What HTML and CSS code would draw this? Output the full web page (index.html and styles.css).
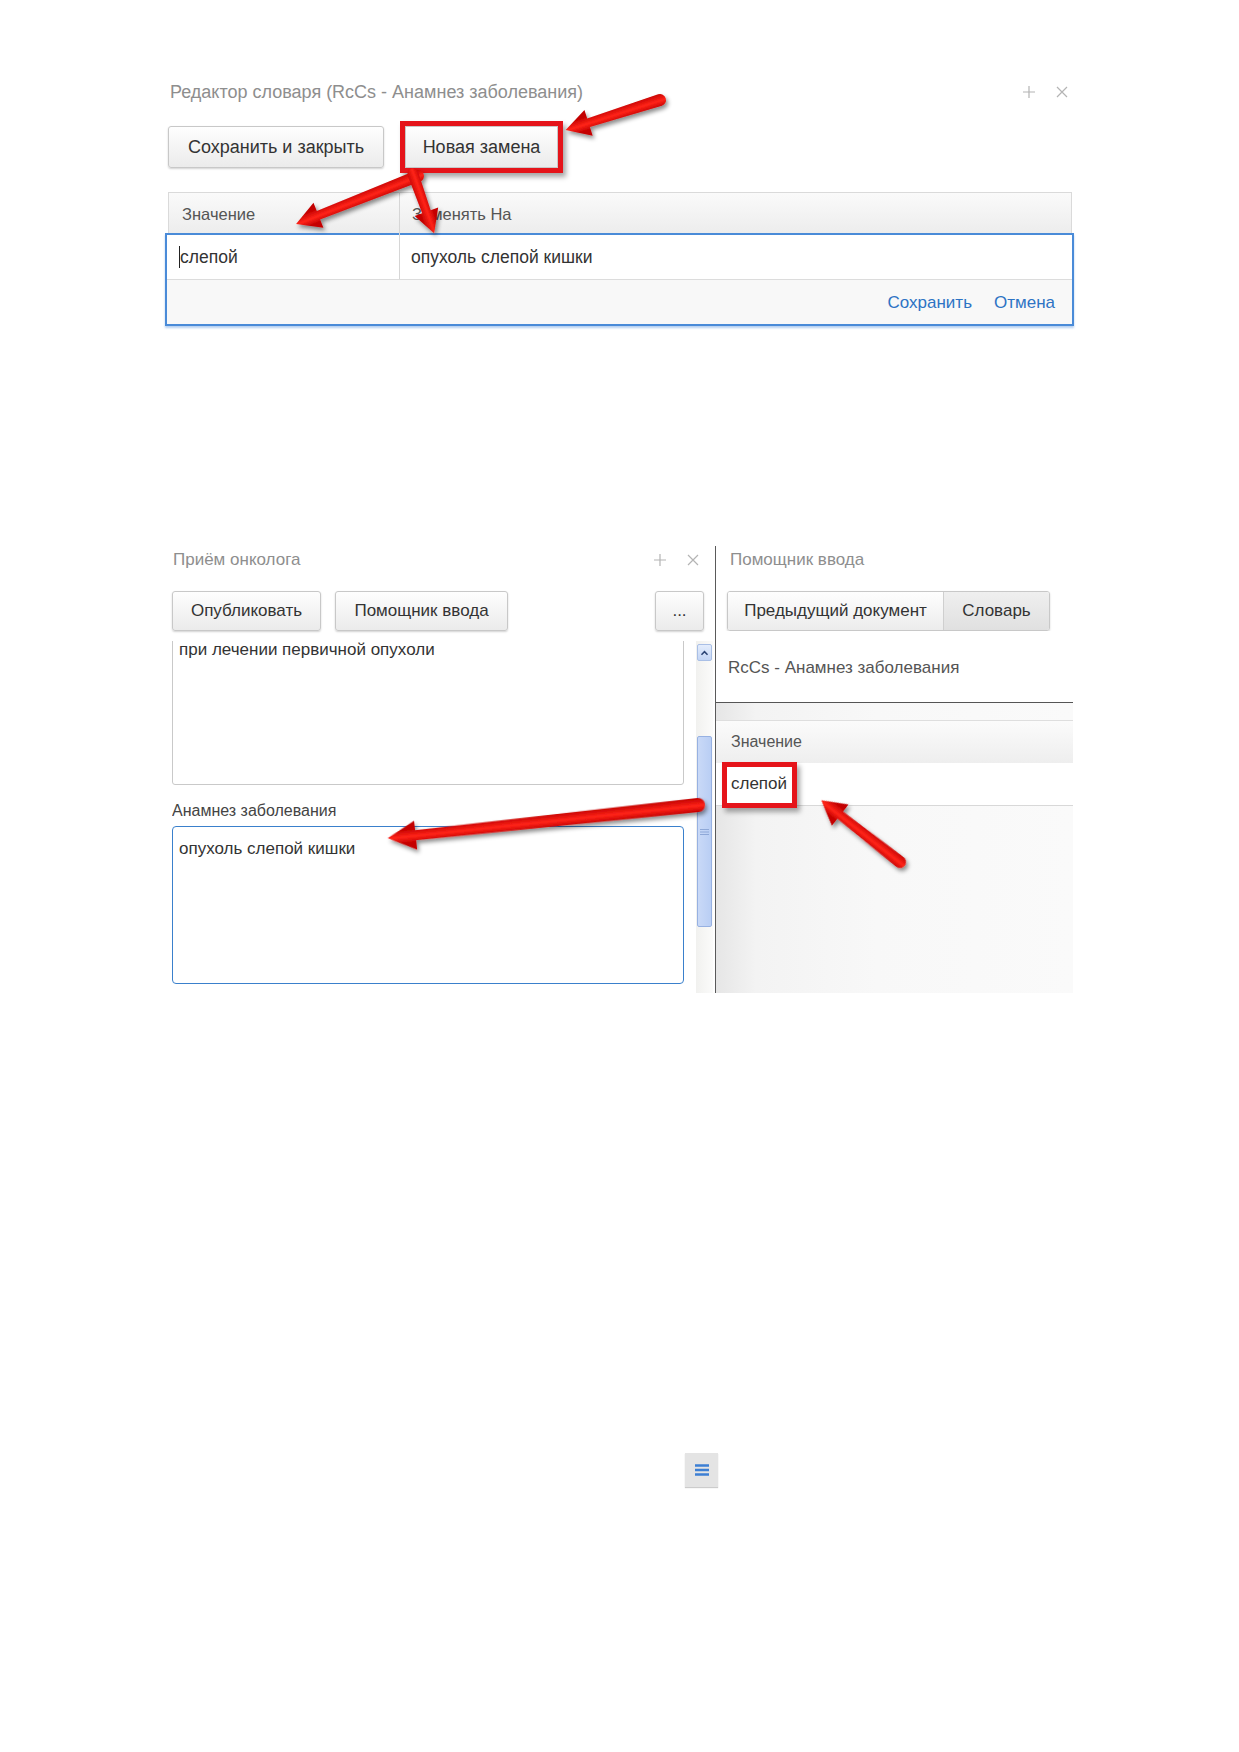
FILE: index.html
```html
<!DOCTYPE html>
<html lang="ru">
<head>
<meta charset="UTF-8">
<meta name="viewport" content="width=device-width, initial-scale=1.0">
<title>Редактор словаря</title>
<link rel="stylesheet" href="styles.css">
</head>
<body>
<div class="page">

<!-- Dictionary editor window -->
<div class="editor">
  <div class="win-head">
    <span class="win-title">Редактор словаря (RcCs - Анамнез заболевания)</span>
    <span class="win-tools">
      <svg width="12" height="12" viewBox="0 0 12 12"><path d="M6 0v12M0 6h12" /></svg>
      <svg width="12" height="12" viewBox="0 0 12 12"><path d="M1 1l10 10M11 1L1 11" /></svg>
    </span>
  </div>
  <div class="toolbar">
    <button class="btn btn-save">Сохранить и закрыть</button>
    <button class="btn btn-new mark">Новая замена</button>
  </div>
  <div class="grid">
    <div class="grid-head">
      <div class="col-value">Значение</div>
      <div class="col-replace">Заменять На</div>
    </div>
    <div class="grid-edit">
      <div class="grid-row">
        <div class="col-value"><span class="caret"></span>слепой</div>
        <div class="col-replace">опухоль слепой кишки</div>
      </div>
      <div class="grid-actions">
        <a href="#">Сохранить</a>
        <a href="#">Отмена</a>
      </div>
    </div>
  </div>
</div>

<!-- Oncologist visit form + input helper -->
<div class="workspace">
  <div class="form-pane">
    <div class="win-head">
      <span class="win-title">Приём онколога</span>
      <span class="win-tools">
        <svg width="12" height="12" viewBox="0 0 12 12"><path d="M6 0v12M0 6h12" /></svg>
        <svg width="12" height="12" viewBox="0 0 12 12"><path d="M1 1l10 10M11 1L1 11" /></svg>
      </span>
    </div>
    <div class="toolbar pane-toolbar">
      <button class="btn btn-publish">Опубликовать</button>
      <button class="btn btn-helper">Помощник ввода</button>
      <button class="btn btn-more">...</button>
    </div>
    <div class="scroll-box">
      <div class="scroll-body">
        <div class="form">
          <div class="memo memo-plain">при лечении первичной опухоли</div>
          <div class="field-label">Анамнез заболевания</div>
          <div class="memo memo-focus">опухоль слепой кишки</div>
        </div>
      </div>
      <div class="scrollbar">
        <div class="sb-up">
          <svg width="15" height="12" viewBox="0 0 15 12"><path d="M4 8l3.5-3.5L11 8" /></svg>
        </div>
        <div class="sb-thumb">
          <svg width="9" height="8" viewBox="0 0 9 8"><path d="M0 1.5h9M0 4h9M0 6.5h9" /></svg>
        </div>
      </div>
    </div>
  </div>

  <div class="helper-pane">
    <div class="win-head">
      <span class="win-title">Помощник ввода</span>
    </div>
    <div class="seg">
      <button class="seg-btn">Предыдущий документ</button>
      <button class="seg-btn active">Словарь</button>
    </div>
    <div class="dict-name">RcCs - Анамнез заболевания</div>
    <div class="dict-list">
      <div class="dict-head">Значение</div>
      <div class="dict-row"><span class="mark cell-mark">слепой</span></div>
    </div>
  </div>
</div>

<div class="menu-btn">
  <svg width="14" height="12" viewBox="0 0 14 12"><path d="M0 1.5h14M0 6h14M0 10.5h14" /></svg>
</div>

<!-- red callout arrows drawn over the screens -->
<svg class="notes" width="1239" height="1752" viewBox="0 0 1239 1752">
  <defs>
    <linearGradient id="arrowFill" gradientUnits="userSpaceOnUse" x1="0" y1="-7" x2="0" y2="7">
      <stop offset="0" stop-color="#c40000"/>
      <stop offset="0.45" stop-color="#ff2418"/>
      <stop offset="1" stop-color="#c20000"/>
    </linearGradient>
    <filter id="arrowShadow" x="-20%" y="-50%" width="140%" height="200%">
      <feDropShadow dx="2" dy="3" stdDeviation="2" flood-color="#000" flood-opacity="0.45"/>
    </filter>
  </defs>
  <g fill="url(#arrowFill)" filter="url(#arrowShadow)">
    <path transform="translate(660 100) rotate(162.3)" d="M0,-6 L75,-4.5 L75,-13.5 L99,0 L75,13.5 L75,4.5 L0,6 A6,6 0 0 1 0,-6 Z"/>
    <path transform="translate(418 176) rotate(158.5)" d="M0,-6 L107,-4.5 L107,-13.5 L131,0 L107,13.5 L107,4.5 L0,6 A6,6 0 0 1 0,-6 Z"/>
    <path transform="translate(413 174) rotate(70.4)" d="M0,-5.5 L40,-4.5 L40,-12.5 L63,0 L40,12.5 L40,4.5 L0,5.5 A5.5,5.5 0 0 1 0,-5.5 Z"/>
    <path transform="translate(900 862) rotate(-141.9)" d="M0,-6 L76,-4.5 L76,-13.5 L100,0 L76,13.5 L76,4.5 L0,6 A6,6 0 0 1 0,-6 Z"/>
    <path transform="translate(698 805) rotate(173.9)" d="M0,-7 L284,-5 L284,-14.5 L312,0 L284,14.5 L284,5 L0,7 A7,7 0 0 1 0,-7 Z"/>
  </g>
</svg>

</div>
</body>
</html>
```

FILE: styles.css
```css
body {
  margin: 0;
  background-color: #fff;
  font-family: "Liberation Sans", Arial, sans-serif;
  color: #333;
}

.page {
  position: relative;
  width: 1239px;
  height: 1752px;
  overflow: hidden;
}

/* window header: grey title + plus / close */
.win-head {
  display: flex;
  align-items: center;
  justify-content: space-between;
  height: 30px;
}

.win-title {
  font-size: 17px;
  color: #8e8e8e;
}

.win-tools {
  display: flex;
  align-items: center;
  gap: 21px;
  padding-right: 6px;
}

.win-tools svg path {
  stroke: #b4b4b4;
  stroke-width: 1.2;
  fill: none;
}

.btn {
  height: 42px;
  padding: 0;
  font-family: "Liberation Sans", Arial, sans-serif;
  font-size: 17px;
  color: #333;
  border: 1px solid #c8c8c8;
  border-radius: 3px;
  background: linear-gradient(#fefefe, #ebebeb);
  box-shadow: 0 1px 2px rgba(0, 0, 0, 0.18);
}

/* red highlight frame */
.mark {
  box-shadow: 0 0 0 5px #e5141a, 3px 4px 5px 5px rgba(0, 0, 0, 0.35);
}

/* ---------- dictionary editor ---------- */
.editor {
  width: 904px;
  margin: 77px 0 0 168px;
}

.editor .win-title {
  padding-left: 2px;
  font-size: 18px;
}

.editor .win-tools {
  padding-right: 4px;
}

.toolbar {
  display: flex;
  gap: 21px;
  margin-top: 19px;
}

.editor .btn {
  font-size: 18px;
}

.btn-save {
  width: 216px;
}

.btn-new {
  width: 153px;
  border-radius: 0;
}

.grid {
  margin-top: 24px;
}

.grid-head {
  display: flex;
  height: 43px;
  box-sizing: border-box;
  border: 1px solid #dadada;
  border-bottom: none;
  background: linear-gradient(#fafafa, #ececec);
  font-size: 16.5px;
  color: #555;
}

.grid-head > div {
  display: flex;
  align-items: center;
}

.grid-head .col-value {
  width: 231px;
  padding-left: 13px;
  box-sizing: border-box;
  border-right: 1px solid #d6d6d6;
}

.grid-head .col-replace {
  padding-left: 12px;
}

.grid-edit {
  margin: -2px -2px 0 -3px;
  border: 2px solid #4a8bd8;
  box-shadow: 0 2px 2px rgba(90, 150, 225, 0.45);
}

.grid-row {
  display: flex;
  height: 45px;
  box-sizing: border-box;
  border-bottom: 1px solid #dcdcdc;
  background-color: #fff;
  font-size: 17.5px;
}

.grid-row > div {
  display: flex;
  align-items: center;
}

.grid-row .col-value {
  width: 233px;
  padding-left: 12px;
  box-sizing: border-box;
  border-right: 1px solid #d6d6d6;
}

.grid-row .col-replace {
  padding-left: 11px;
}

.caret {
  display: inline-block;
  width: 1px;
  height: 22px;
  background-color: #222;
}

.grid-actions {
  display: flex;
  align-items: center;
  justify-content: flex-end;
  gap: 22px;
  height: 44px;
  padding-top: 2px;
  box-sizing: border-box;
  padding-right: 17px;
  background-color: #f8f8f8;
}

.grid-actions a {
  font-size: 17px;
  color: #2d73c4;
  text-decoration: none;
}

/* ---------- visit form and helper ---------- */
.workspace {
  display: flex;
  width: 901px;
  height: 447px;
  margin: 220px 0 0 172px;
}

.form-pane {
  width: 543px;
}

.form-pane .win-head {
  height: 28px;
  padding-right: 10px;
}

.form-pane .win-title {
  padding-left: 1px;
}

.pane-toolbar {
  gap: 14px;
  margin-top: 17px;
  padding-right: 11px;
}

.pane-toolbar .btn {
  height: 40px;
}

.btn-publish {
  width: 149px;
}

.btn-helper {
  width: 173px;
}

.btn-more {
  width: 49px;
  margin-left: auto;
}

.scroll-box {
  display: flex;
  gap: 12px;
  height: 352px;
  margin-top: 10px;
}

.scroll-body {
  width: 512px;
  overflow: hidden;
}

.form {
  margin-top: -22px;
}

.memo {
  box-sizing: border-box;
  padding: 0 6px;
  font-size: 17px;
  line-height: 20px;
  background-color: #fff;
}

.memo-plain {
  height: 166px;
  padding-top: 20px;
  border: 1px solid #c9c9c9;
  border-radius: 3px;
}

.field-label {
  margin-top: 16px;
  font-size: 16px;
  line-height: 20px;
  color: #444;
}

.memo-focus {
  height: 158px;
  margin-top: 5px;
  padding-top: 12px;
  border: 1px solid #3a80cc;
  border-radius: 4px;
}

/* legacy-style vertical scrollbar */
.scrollbar {
  position: relative;
  width: 17px;
  background: linear-gradient(to right, #f1f1ef, #fbfbfa);
}

.sb-up {
  display: flex;
  align-items: center;
  justify-content: center;
  height: 15px;
  margin: 3px 1px 0;
  border: 1px solid #a9bfe6;
  border-radius: 2px;
  background: linear-gradient(#e4edfc, #c3d5f5);
}

.sb-up path {
  stroke: #2b4474;
  stroke-width: 1.8;
  fill: none;
}

.sb-thumb {
  display: flex;
  align-items: center;
  justify-content: center;
  height: 189px;
  margin: 75px 1px 0;
  border: 1px solid #97b1e2;
  border-radius: 2px;
  background: linear-gradient(to right, #c9d9f7, #b9cef4);
}

.sb-thumb path {
  stroke: #8ea8d8;
  stroke-width: 1;
}

.helper-pane {
  display: flex;
  flex-direction: column;
  flex: 1;
  border-left: 1px solid #5a5a5a;
}

.helper-pane .win-head {
  height: 28px;
  padding-left: 14px;
}

.seg {
  display: flex;
  width: 323px;
  height: 40px;
  margin: 17px 0 0 11px;
  box-sizing: border-box;
  border: 1px solid #c8c8c8;
  border-radius: 3px;
  box-shadow: 0 1px 2px rgba(0, 0, 0, 0.18);
  overflow: hidden;
}

.seg-btn {
  height: 100%;
  padding: 0;
  border: none;
  font-family: "Liberation Sans", Arial, sans-serif;
  font-size: 17px;
  color: #333;
  background: linear-gradient(#fefefe, #ececec);
}

.seg-btn:first-child {
  width: 216px;
  border-right: 1px solid #cfcfcf;
}

.seg-btn.active {
  flex: 1;
  background: linear-gradient(#efefef, #e0e0e0);
}

.dict-name {
  height: 72px;
  box-sizing: border-box;
  padding: 26px 0 0 12px;
  border-bottom: 1px solid #555;
  font-size: 17px;
  line-height: 22px;
  color: #555;
  background-color: #fff;
}

.dict-list {
  flex: 1;
  padding-top: 17px;
  background: linear-gradient(to right, #e6e6e6, #f3f3f3 40px, #f8f8f8 160px, #fafafa);
}

.dict-head {
  display: flex;
  align-items: center;
  height: 43px;
  box-sizing: border-box;
  padding-left: 15px;
  border-top: 1px solid #dedede;
  font-size: 16px;
  color: #555;
  background: linear-gradient(#fbfbfb, #eeeeee);
}

.dict-row {
  display: flex;
  align-items: center;
  height: 43px;
  box-sizing: border-box;
  padding-left: 11px;
  border-bottom: 1px solid #d8d8d8;
  background-color: #fff;
  font-size: 17px;
}

.cell-mark {
  display: inline-block;
  margin-top: 2px;
  padding: 7px 5px 9px 4px;
  line-height: 20px;
  background-color: #fff;
}

/* small menu button at the page bottom */
.menu-btn {
  display: flex;
  align-items: center;
  justify-content: center;
  width: 33px;
  height: 34px;
  margin: 460px 0 0 685px;
  background-color: #e4e4e4;
  box-shadow: 0 1px 1px rgba(0, 0, 0, 0.2);
}

.menu-btn path {
  stroke: #3d7fd3;
  stroke-width: 2.4;
}

.notes {
  position: absolute;
  top: 0;
  left: 0;
  pointer-events: none;
}
```
